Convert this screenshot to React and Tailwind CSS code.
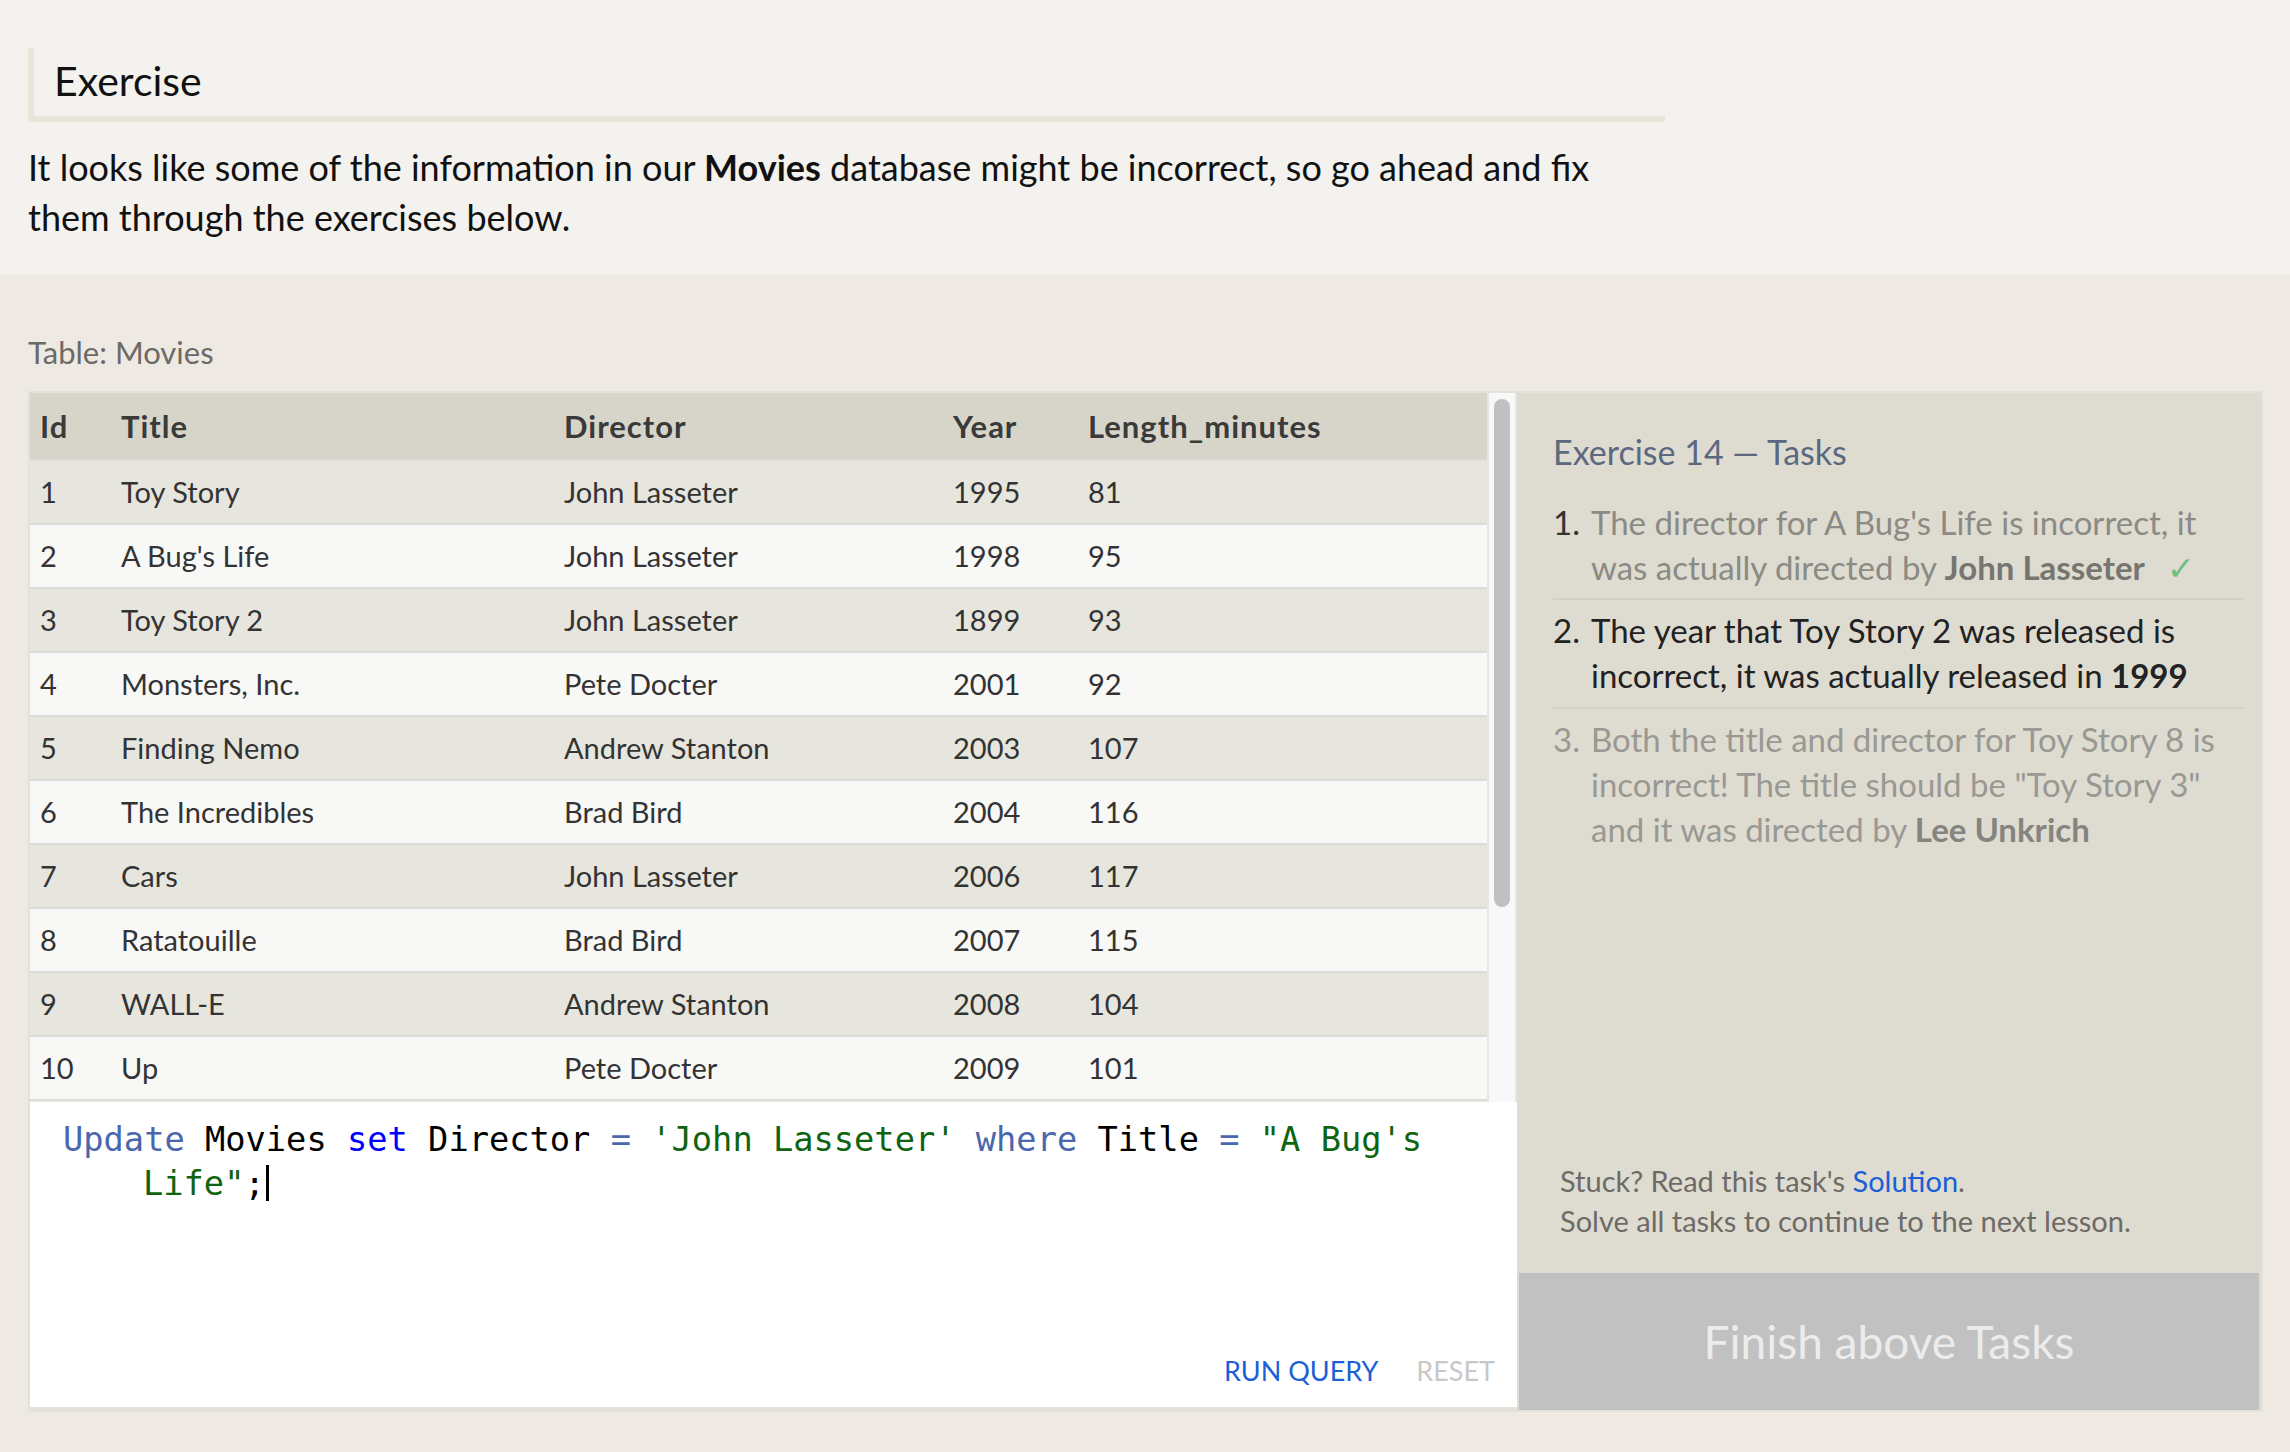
const MOVIES = [
  [1, 'Toy Story', 'John Lasseter', 1995, 81],
  [2, "A Bug's Life", 'John Lasseter', 1998, 95],
  [3, 'Toy Story 2', 'John Lasseter', 1899, 93],
  [4, 'Monsters, Inc.', 'Pete Docter', 2001, 92],
  [5, 'Finding Nemo', 'Andrew Stanton', 2003, 107],
  [6, 'The Incredibles', 'Brad Bird', 2004, 116],
  [7, 'Cars', 'John Lasseter', 2006, 117],
  [8, 'Ratatouille', 'Brad Bird', 2007, 115],
  [9, 'WALL-E', 'Andrew Stanton', 2008, 104],
  [10, 'Up', 'Pete Docter', 2009, 101],
]

const COLS = 'grid grid-cols-[81px_443px_389px_135px_1fr] pl-[10px]'

function Table() {
  return (
    <div className="flex h-[709px]">
      <div className="flex-1 text-[29px] text-[#333]">
        <div className={`${COLS} h-[68px] items-center border-b-2 border-[#dcdcd8] bg-[#d7d5c9] text-[31px] font-bold tracking-[1px] text-[#3a3a3a]`}>
          <div>Id</div>
          <div>Title</div>
          <div>Director</div>
          <div>Year</div>
          <div>Length_minutes</div>
        </div>
        {MOVIES.map((m, i) => (
          <div
            key={m[0]}
            className={`${COLS} h-[64px] items-center border-b-2 border-[#dcdcd8] ${i % 2 === 0 ? 'bg-[#e7e6de]' : 'bg-[#f8f8f7]'}`}
          >
            {m.map((v, j) => (
              <div key={j}>{v}</div>
            ))}
          </div>
        ))}
      </div>
      {/* scrollbar */}
      <div className="w-[30px] border-x-2 border-[#e6e6e4] bg-[#f8f8f8] pt-[6px]">
        <div className="mx-auto h-[508px] w-[16px] rounded-full bg-[#c0c0c0]" />
      </div>
    </div>
  )
}

function Editor() {
  return (
    <div className="flex h-[308px] flex-col border-b-[3px] border-[#e3e1d8] bg-white">
      <div className="pl-[113px] pr-[20px] pt-[19px] font-['DejaVu_Sans_Mono',monospace] text-[33.7px] leading-[38px] text-black [text-indent:-80px]">
        <span className="text-[#4a67ad]">Update</span> Movies <span className="text-[#0000ff]">set</span> Director{' '}
        <span className="text-[#4a67ad]">=</span> <span className="text-[#0f640f]">'John Lasseter'</span>{' '}
        <span className="text-[#4a67ad]">where</span> Title <span className="text-[#4a67ad]">=</span>{' '}
        <span className="text-[#0f640f]">"A Bug's Life"</span>;
        <span className="ml-[1px] inline-block h-[36px] w-[3px] translate-y-[6px] bg-black [text-indent:0]" />
      </div>
      <div className="mt-auto flex justify-end gap-[38px] pb-[16px] pr-[22px] text-[27px]">
        <span className="text-[#1a5fd6]">RUN QUERY</span>
        <span className="text-[#c8c8c8]">RESET</span>
      </div>
    </div>
  )
}

function Tasks() {
  return (
    <div className="flex w-[744px] flex-col bg-[#dedcd0]">
      <div className="pl-[36px] pr-[18px] pt-[36px]">
        <h3 className="text-[34px] leading-[46px] text-[#5c6880]">Exercise 14 — Tasks</h3>
        <ol className="mt-[25px] text-[33px] leading-[45px]">
          <li className="flex border-b-2 border-[#d2d0c5] pb-[8px]">
            <span className="w-[38px] shrink-0 text-[#333]">1.</span>
            <span className="text-[#8b8a85]">
              The director for A Bug's Life is incorrect, it was actually directed by{' '}
              <b className="text-[#767570]">John Lasseter</b>
              <span className="ml-[22px] text-[#6dc07f]">✓</span>
            </span>
          </li>
          <li className="flex border-b-2 border-[#d2d0c5] pb-[9px] pt-[8px]">
            <span className="w-[38px] shrink-0 text-[#222]">2.</span>
            <span className="text-[#222]">
              The year that Toy Story 2 was released is incorrect, it was actually released in <b>1999</b>
            </span>
          </li>
          <li className="flex pt-[8px]">
            <span className="w-[38px] shrink-0 text-[#999893]">3.</span>
            <span className="text-[#999893]">
              Both the title and director for Toy Story 8 is incorrect! The title should be "Toy Story 3" and it was directed by{' '}
              <b className="text-[#858480]">Lee Unkrich</b>
            </span>
          </li>
        </ol>
      </div>
      <div className="mt-auto pb-[32px] pl-[43px] text-[29px] leading-[40px] text-[#6e6a66]">
        <p>
          Stuck? Read this task's <span className="text-[#1a5fd6]">Solution</span>.
        </p>
        <p>Solve all tasks to continue to the next lesson.</p>
      </div>
      <div className="mx-[2px] flex h-[137px] items-center justify-center bg-[#c1c1c1] text-[46px] text-[#ececec]">
        Finish above Tasks
      </div>
    </div>
  )
}

export default function App() {
  return (
    <div className="min-h-[1452px] bg-[#eeeae3] font-['Lato',sans-serif]">
      <section className="h-[275px] bg-[#f3f2ee] px-[28px] pt-[48px]">
        <div className="flex h-[74px] w-[1637px] items-center border-b-[6px] border-l-[6px] border-[#e7e6db] pl-[20px] pb-[2px] text-[41px] text-[#111]">
          Exercise
        </div>
        <p className="mt-[20px] w-[1600px] text-[36px] leading-[50px] text-[#111]">
          It looks like some of the information in our <b>Movies</b> database might be incorrect, so go ahead and fix them through the
          exercises below.
        </p>
      </section>
      <section className="px-[28px] pt-[57px]">
        <div className="text-[31px] leading-[40px] text-[#6b6a66]">Table: Movies</div>
        <div className="mt-[19px] flex w-[2235px] border-2 border-[#e3e1d8]">
          <div className="flex-1">
            <Table />
            <Editor />
          </div>
          <Tasks />
        </div>
      </section>
    </div>
  )
}
